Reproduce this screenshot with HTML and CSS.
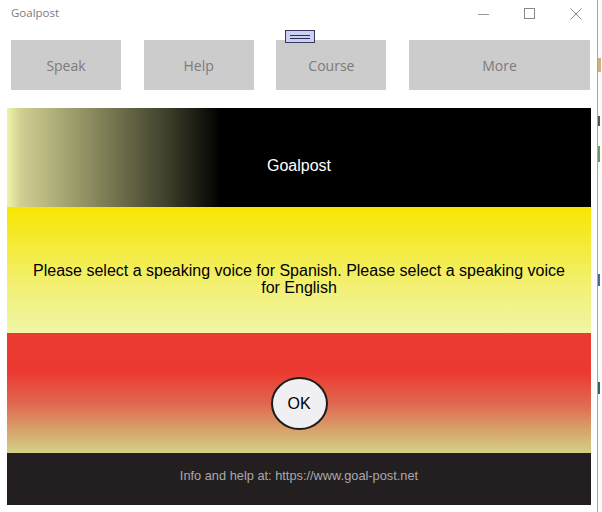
FILE: index.html
```html
<!DOCTYPE html>
<html>
<head>
<meta charset="utf-8">
<link rel="stylesheet" href="styles.css">
</head>
<body>
<div class="screen">
  <div class="window">
    <div class="titlebar">
      <span class="title">Goalpost</span>
      <div class="controls">
        <svg class="ctl" width="46" height="20" viewBox="0 0 46 20"><line x1="19" y1="14.5" x2="30" y2="14.5" stroke="#999" stroke-width="1"/></svg>
        <svg class="ctl" width="46" height="20" viewBox="0 0 46 20"><rect x="19.5" y="8.5" width="10" height="10" fill="none" stroke="#888" stroke-width="1"/></svg>
        <svg class="ctl" width="46" height="20" viewBox="0 0 46 20"><path d="M19.5 8.5 L30.5 19.5 M30.5 8.5 L19.5 19.5" stroke="#888" stroke-width="1"/></svg>
      </div>
    </div>
    <div class="toolbar">
      <div class="tbtn">Speak</div>
      <div class="tbtn">Help</div>
      <div class="tbtn">Course</div>
      <div class="tbtn wide">More</div>
      <div class="handle"><span></span><span></span></div>
    </div>
    <div class="panel">
      <div class="header">Goalpost</div>
      <div class="message">Please select a speaking voice for Spanish. Please select a speaking voice for English</div>
      <div class="action"><div class="ok">OK</div></div>
      <div class="footer">Info and help at: https://www.goal-post.net</div>
    </div>
  </div>
  <div class="desk">
    <div class="frag f1"></div>
    <div class="frag f2"></div>
    <div class="frag f3"></div>
    <div class="frag f4"></div>
    <div class="frag f5"></div>
  </div>
</div>
</body>
</html>
```

FILE: styles.css
```css
* { box-sizing: border-box; }
html, body { margin: 0; padding: 0; background: #fff; }
body { width: 602px; height: 512px; overflow: hidden; font-family: "Liberation Sans", Arial, sans-serif; }

.screen { display: flex; width: 602px; height: 512px; }

.window {
  position: relative;
  width: 598px;
  height: 512px;
  background: #fff;
  border-right: 1px solid #a7a7a7;
  display: flex;
  flex-direction: column;
}

.titlebar {
  height: 30px;
  display: flex;
  align-items: flex-start;
  justify-content: space-between;
}
.title {
  font-family: "Open Sans", "Noto Sans", sans-serif;
  font-size: 11.5px;
  color: #7a7a7a;
  margin: 5px 0 0 11px;
}
.controls { display: flex; }
.ctl { display: block; }

.toolbar {
  position: relative;
  display: flex;
  gap: 22.7px;
  padding: 10px 0 0 11px;
  width: 590px;
}
.tbtn {
  width: 110px;
  height: 50px;
  background: #cccccc;
  color: #7b7b7b;
  font-family: "Open Sans", "Noto Sans", sans-serif;
  font-size: 14px;
  display: flex;
  align-items: center;
  justify-content: center;
}
.tbtn.wide { flex: 1; width: auto; }

.handle {
  position: absolute;
  left: 285px;
  top: 0;
  width: 30px;
  height: 13px;
  background: #c9d0f2;
  border: 1px solid #3a3a60;
  display: flex;
  flex-direction: column;
  justify-content: center;
  align-items: center;
  gap: 2px;
}
.handle span { display: block; width: 20px; height: 1px; background: #2e2e50; }

.panel {
  margin: 18px 0 0 7px;
  width: 584px;
  display: flex;
  flex-direction: column;
}

.header {
  height: 99px;
  background: linear-gradient(to right, #eff3a8 0px, #cfcf92 14px, #8f8f62 80px, #3f3f2c 160px, #000 214px);
  color: #fff;
  font-size: 16px;
  display: flex;
  align-items: center;
  justify-content: center;
  padding-top: 16px;
}

.message {
  height: 126px;
  background: linear-gradient(#f8e600 0%, #f5ea2e 25%, #f2f078 65%, #eff6a6 100%);
  color: #000;
  font-size: 16px;
  line-height: 17px;
  text-align: center;
  display: flex;
  align-items: center;
  justify-content: center;
  padding: 18px 24px 0;
}

.action {
  height: 120px;
  background: linear-gradient(#ea3b31 0%, #ec3930 32%, #e06650 58%, #d8a06a 80%, #d3d186 100%);
  display: flex;
  align-items: center;
  justify-content: center;
  padding-top: 21px;
}
.ok {
  width: 57px;
  height: 53px;
  border-radius: 50%;
  border: 2px solid #1c1c1c;
  background: #f0f0f2;
  color: #000;
  font-size: 16px;
  display: flex;
  align-items: center;
  justify-content: center;
}

.footer {
  height: 52px;
  background: #231f20;
  color: #a9a9a9;
  font-size: 12.8px;
  text-align: center;
  padding-top: 15px;
}

.desk {
  flex: 1;
  background: #fbfbfb;
  display: flex;
  flex-direction: column;
  padding-top: 58px;
}
.frag { width: 3px; }
.f1 { height: 14px; background: #c8b480; margin-top: 0; }
.f2 { height: 10px; background: #555; margin-top: 44px; width: 2px; }
.f3 { height: 16px; background: #6a9a6a; margin-top: 20px; width: 2px; }
.f4 { height: 12px; background: #4a6aa0; margin-top: 112px; width: 2px; }
.f5 { height: 12px; background: #2a6a5a; margin-top: 96px; width: 2px; }
```
